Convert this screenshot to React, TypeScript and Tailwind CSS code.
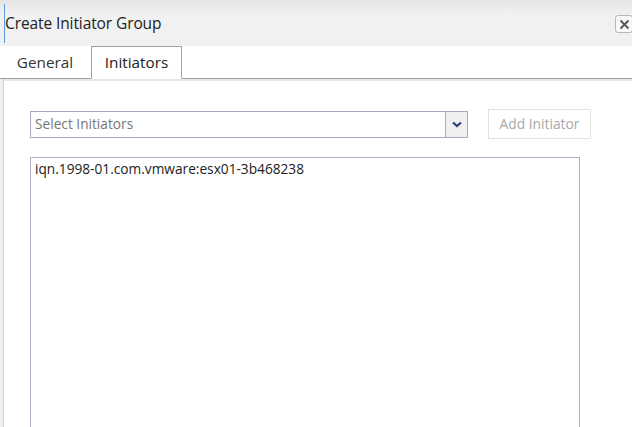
export default function App() {
  return (
    <div className="w-[632px] h-[427px] overflow-hidden bg-white flex flex-col" style={{ fontFamily: '"Open Sans", sans-serif' }}>
      {/* Title bar */}
      <div className="h-[46px] shrink-0 bg-gradient-to-b from-[#e4e4e4] via-[#f1f1f1] via-30% to-[#f1f1f1] flex items-start justify-between pt-[4px]">
        <div className="h-[39px] ml-[4px] border-l border-[#5b9be0] flex items-center text-[15.5px] text-[#222] tracking-[-0.1px]">
          Create Initiator Group
        </div>
        <button className="w-[18px] h-[18px] mt-[11px] mr-[-1px] rounded-[3px] border border-[#b8b8c4] bg-[#f7f7f7] flex items-center justify-center">
          <svg width="11" height="11" viewBox="0 0 11 11">
            <path d="M1.5 1.5 L9.5 9.5 M9.5 1.5 L1.5 9.5" stroke="#555" strokeWidth="1.8" />
          </svg>
        </button>
      </div>

      {/* Tabs */}
      <div className="h-[33px] shrink-0 flex items-end pl-[5px] border-b border-[#a0a0a0]">
        <div className="w-[80px] mr-[6px] h-[32px] flex items-center justify-center text-[15.3px] text-[#333]">General</div>
        <div className="w-[91px] h-[33px] mb-[-1px] border border-[#a0a0a0] border-b-white bg-white flex items-center justify-center text-[15.3px] text-[#222]">
          Initiators
        </div>
      </div>

      {/* Body */}
      <div className="flex-1 flex">
        <div className="w-[4px] bg-[#f0f0f0] border-r border-[#d0d0d0]" />
        <div className="flex-1 flex flex-col border-t-2 border-[#e6e6e6] pl-[26px] pt-[28px]">
          <div className="flex items-center">
            <div className="w-[438px] h-[27px] border border-[#a9a9c4] flex">
              <div className="flex-1 flex items-center pl-[4px] text-[13.7px] text-[#777]">Select Initiators</div>
              <div className="w-[22px] border-l border-[#a9a9c4] bg-[#f0f0f0] flex items-center justify-center">
                <svg width="10" height="7" viewBox="0 0 10 7">
                  <path d="M1 1.5 L5 5 L9 1.5" stroke="#2a3f7a" strokeWidth="2.2" fill="none" />
                </svg>
              </div>
            </div>
            <button className="ml-[20px] w-[103px] h-[30px] border border-[#e2e2e2] bg-white text-[13.8px] text-[#a8a8a8]">
              Add Initiator
            </button>
          </div>
          <div className="mt-[18px] w-[550px] flex-1 border border-[#b0b0c8] border-b-0 pl-[4px] pt-[1px] text-[13.7px] text-[#222]">
            iqn.1998-01.com.vmware:esx01-3b468238
          </div>
        </div>
      </div>
    </div>
  )
}
